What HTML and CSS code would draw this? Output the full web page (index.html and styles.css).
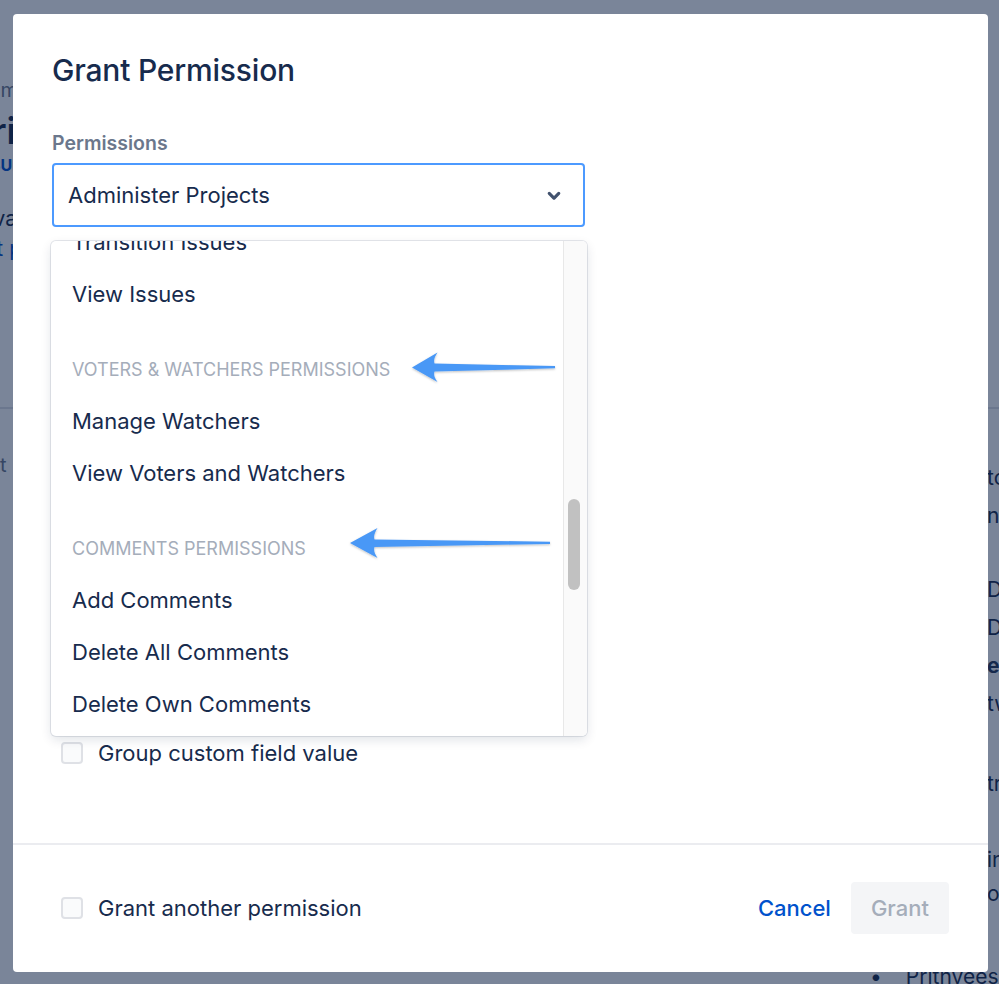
FILE: index.html
```html
<!DOCTYPE html>
<html lang="en">
<head>
<meta charset="UTF-8">
<meta name="viewport" content="width=device-width, initial-scale=1.0">
<title>Grant Permission</title>
<link rel="stylesheet" href="styles.css">
</head>
<body>

<!-- page behind the dialog -->
<div class="page">
    <div class="page-left">
        <div class="bg-crumb">Adm</div>
        <div class="bg-heading">Pri</div>
        <div class="bg-key">ISSUE</div>
        <div class="bg-text">Java</div>
        <div class="bg-link">Set p</div>
    </div>
    <div class="bg-rule"></div>
    <div class="page-row">
        <div class="bg-col-left">
            <div class="bg-muted">Project</div>
        </div>
        <div class="bg-col-right">
            <div class="bg-line">to</div>
            <div class="bg-line">no</div>
            <div class="bg-line gap-lg">Default</div>
            <div class="bg-line">Default</div>
            <div class="bg-line bold">ed</div>
            <div class="bg-line">two</div>
            <div class="bg-line gap-xl">tra</div>
            <div class="bg-line gap-md">in</div>
            <div class="bg-line tight">or</div>
        </div>
    </div>
    <div class="bg-list">
        <span class="bullet">•</span>
        <span>Prithveesh</span>
    </div>
</div>

<div class="blanket"></div>

<div class="modal">
    <div class="modal-body">
        <h1 class="modal-title">Grant Permission</h1>

        <div class="field-label">Permissions</div>
        <div class="select-wrap">
            <div class="select">
                <span>Administer Projects</span>
                <svg class="chevron" viewBox="0 0 24 24" width="38" height="38">
                    <path d="M8.292 10.293a1.009 1.009 0 0 0 0 1.419l2.939 2.965c.218.215.5.322.779.322s.556-.107.769-.322l2.93-2.955a1.01 1.01 0 0 0 0-1.419.987.987 0 0 0-1.406 0l-2.298 2.317-2.307-2.327a.99.99 0 0 0-1.406 0z" fill="#42526e"/>
                </svg>
            </div>

            <div class="menu">
                <div class="menu-list">
                    <div class="menu-scroll">
                        <div class="menu-item">Transition Issues</div>
                        <div class="menu-item">View Issues</div>
                        <div class="menu-group">Voters &amp; Watchers Permissions</div>
                        <div class="menu-item">Manage Watchers</div>
                        <div class="menu-item">View Voters and Watchers</div>
                        <div class="menu-group">Comments Permissions</div>
                        <div class="menu-item">Add Comments</div>
                        <div class="menu-item">Delete All Comments</div>
                        <div class="menu-item">Delete Own Comments</div>
                        <div class="menu-item">Edit All Comments</div>
                    </div>
                </div>
                <div class="menu-track">
                    <div class="menu-thumb"></div>
                </div>
            </div>
        </div>

        <div class="grantees">
            <label class="check-row"><span class="checkbox"></span>Project Role</label>
            <label class="check-row"><span class="checkbox"></span>Application access</label>
            <label class="check-row"><span class="checkbox"></span>Group</label>
            <label class="check-row"><span class="checkbox"></span>Single user</label>
            <label class="check-row"><span class="checkbox"></span>Public</label>
            <label class="check-row"><span class="checkbox"></span>Reporter</label>
            <label class="check-row"><span class="checkbox"></span>Project lead</label>
            <label class="check-row"><span class="checkbox"></span>Current assignee</label>
            <label class="check-row"><span class="checkbox"></span>User custom field value</label>
            <label class="check-row"><span class="checkbox"></span>Group custom field value</label>
        </div>
    </div>

    <div class="modal-footer">
        <label class="check-row"><span class="checkbox"></span>Grant another permission</label>
        <div class="actions">
            <button class="btn-link">Cancel</button>
            <button class="btn-disabled">Grant</button>
        </div>
    </div>
</div>

<!-- annotation arrows drawn over the screenshot -->
<svg class="annotations" viewBox="0 0 999 984" width="999" height="984">
    <defs>
        <filter id="arrowShadow" x="-10%" y="-50%" width="120%" height="200%">
            <feDropShadow dx="0" dy="1" stdDeviation="0.8" flood-color="#000" flood-opacity="0.25"/>
        </filter>
    </defs>
    <path filter="url(#arrowShadow)" fill="#4a98f6"
          d="M412,367.5 L437.5,352.5 C434.5,357 433.5,360 434.5,363.5 L555,366 L555,368.3 L434.5,371.5 C433.5,375 434.5,378 437.5,382 Z"/>
    <path filter="url(#arrowShadow)" fill="#4a98f6"
          d="M350,543 L377.5,528 C374.5,533 373.5,536 374.5,539.5 L550,541.7 L550,544 L374.5,547 C373.5,550.5 374.5,553.5 377.5,558 Z"/>
</svg>

</body>
</html>
```

FILE: styles.css
```css
body {
    margin: 0;
    width: 999px;
    height: 984px;
    overflow: hidden;
    font-family: Inter, "Noto Sans", "Liberation Sans", sans-serif;
    color: #172b4d;
    background-color: #fff;
}

/* ---------- page behind the dialog ---------- */

.page {
    height: 984px;
    overflow: hidden;
}

/* words end just under the dialog's left edge */
.page-left {
    width: 16px;
    display: flex;
    flex-direction: column;
    align-items: flex-end;
    padding-top: 76px;
    white-space: nowrap;
}

.bg-crumb {
    font-size: 20px;
    line-height: 28px;
    color: #6b778c;
    margin-right: -2px;
}

.bg-heading {
    font-size: 36px;
    font-weight: 600;
    line-height: 46px;
    margin-top: 4px;
}

.bg-key {
    font-size: 16px;
    font-weight: 700;
    color: #0052cc;
    line-height: 22px;
    margin-right: -6px;
}

.bg-text {
    font-size: 21px;
    line-height: 30px;
    margin-top: 28px;
    margin-right: -1px;
}

.bg-link {
    font-size: 21px;
    line-height: 30px;
    color: #0052cc;
    margin-right: -6px;
}

.bg-rule {
    height: 2px;
    background-color: #dfe1e6;
    margin-top: 143px;
}

.page-row {
    display: flex;
}

.bg-col-left {
    margin-left: -60px;
    width: 1047px;
    flex-shrink: 0;
    padding-top: 44px;
}

.bg-muted {
    font-size: 20px;
    color: #6b778c;
}

.bg-col-right {
    padding-top: 50px;
    white-space: nowrap;
}

.bg-line {
    font-size: 21px;
    line-height: 38px;
}

.bg-line.gap-lg {
    margin-top: 36px;
}

.bg-line.gap-md {
    margin-top: 38px;
}

.bg-line.gap-xl {
    margin-top: 42px;
}

.bg-line.tight {
    margin-top: -4px;
}

.bg-line.bold {
    font-weight: 700;
    color: #253858;
}

.bg-list {
    margin: 51px 0 0 870px;
    display: flex;
    gap: 24px;
    font-size: 21px;
    white-space: nowrap;
}

/* ---------- blanket + dialog ---------- */

.blanket {
    position: fixed;
    inset: 0;
    background-color: rgba(9, 30, 66, 0.54);
}

.modal {
    position: fixed;
    left: 13px;
    top: 14px;
    width: 975px;
    height: 958px;
    background-color: #fff;
    border-radius: 4px;
    display: flex;
    flex-direction: column;
}

.modal-body {
    flex: 1;
    padding: 38px 39px 0 39px;
}

.modal-title {
    margin: 0;
    font-size: 30px;
    font-weight: 500;
    line-height: 36px;
    letter-spacing: -0.2px;
}

.field-label {
    margin-top: 44px;
    font-size: 19.5px;
    font-weight: 600;
    line-height: 22px;
    color: #6b778c;
}

.select-wrap {
    position: relative;
    margin-top: 9px;
    width: 533px;
}

.select {
    height: 64px;
    box-sizing: border-box;
    border: 2px solid #4c9aff;
    border-radius: 4px;
    padding: 0 10px 0 14px;
    display: flex;
    align-items: center;
    justify-content: space-between;
    font-size: 22px;
}

.chevron {
    display: block;
}

/* dropdown menu */

.menu {
    position: absolute;
    top: calc(100% + 14px);
    left: -1px;
    width: 536px;
    height: 495px;
    background-color: #fff;
    border-radius: 5px;
    box-shadow: 0 0 0 1px rgba(9, 30, 66, 0.1), 0 4px 11px rgba(9, 30, 66, 0.12);
    display: flex;
    overflow: hidden;
    z-index: 2;
}

.menu-list {
    flex: 1;
    overflow: hidden;
}

.menu-scroll {
    margin-top: -25px;
}

.menu-item {
    height: 52px;
    display: flex;
    align-items: center;
    padding-left: 21px;
    font-size: 22px;
}

.menu-group {
    height: 52px;
    margin-top: 23px;
    display: flex;
    align-items: center;
    padding-left: 21px;
    font-size: 18px;
    text-transform: uppercase;
    color: #a5adba;
}

.menu-track {
    width: 24px;
    box-sizing: border-box;
    border-left: 1px solid #e8e8e8;
    background-color: #fafafa;
    padding: 258px 0 0 4px;
}

.menu-thumb {
    width: 12px;
    height: 91px;
    border-radius: 6px;
    background-color: #c1c1c1;
}

/* grantee checkboxes */

.grantees {
    margin-top: 40px;
    display: flex;
    flex-direction: column;
    gap: 16px;
}

.check-row {
    height: 36px;
    display: flex;
    align-items: center;
    font-size: 22px;
}

.checkbox {
    width: 22px;
    height: 22px;
    box-sizing: border-box;
    border: 2px solid #dfe1e6;
    border-radius: 4px;
    background-color: #fafbfc;
    margin: 0 15px 0 9px;
}

/* footer */

.modal-footer {
    border-top: 2px solid #ebecf0;
    padding: 37px 39px 38px 39px;
    display: flex;
    align-items: center;
    justify-content: space-between;
}

.actions {
    display: flex;
    align-items: center;
}

.btn-link,
.btn-disabled {
    font-family: inherit;
    font-size: 22px;
    font-weight: 500;
    height: 52px;
    border: none;
    border-radius: 4px;
    padding: 0 20px;
    cursor: pointer;
}

.btn-link {
    background: none;
    color: #0052cc;
}

.btn-disabled {
    background-color: #f4f5f7;
    color: #a5adba;
    cursor: not-allowed;
}

/* annotations */

.annotations {
    position: fixed;
    left: 0;
    top: 0;
    pointer-events: none;
    z-index: 5;
}
```
